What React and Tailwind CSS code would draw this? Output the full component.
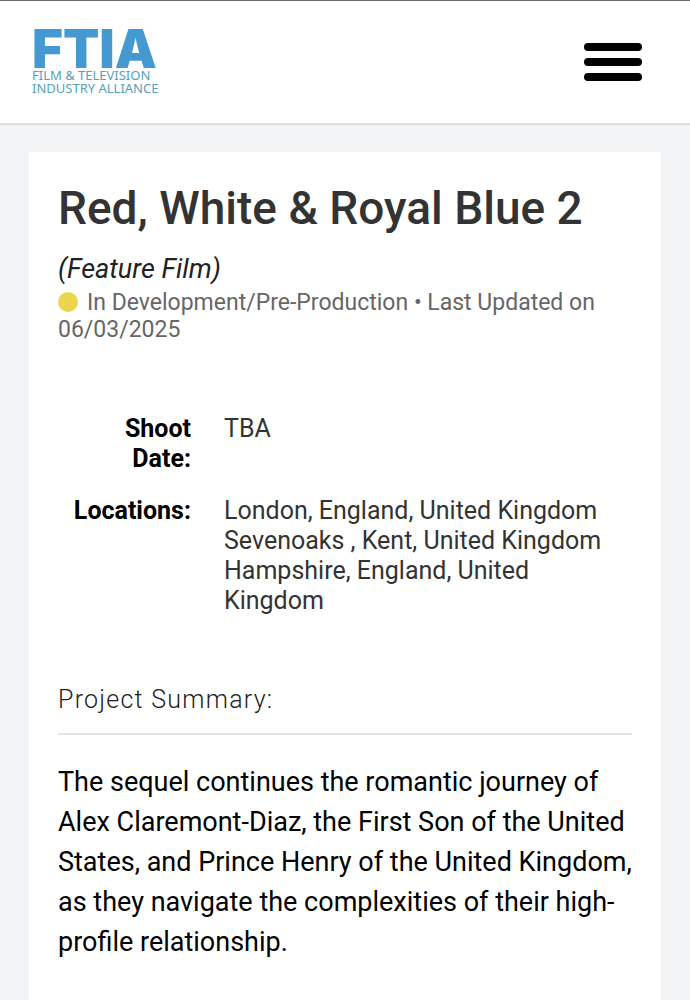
import React from 'react';

const PROJECT = {
  title: 'Red, White & Royal Blue 2',
  type: 'Feature Film',
  status: 'In Development/Pre-Production',
  updated: '06/03/2025',
  shootDate: 'TBA',
  locations: [
    'London, England, United Kingdom',
    'Sevenoaks , Kent, United Kingdom',
    'Hampshire, England, United Kingdom',
  ],
  summary: 'The sequel continues the romantic journey of Alex Claremont-Diaz, the First Son of the United States, and Prince Henry of the United Kingdom, as they navigate the complexities of their high-profile relationship.',
};

function Logo() {
  return (
    <a href="#" className="block text-[#4499d3]">
      <span className="block font-['Inter',sans-serif] text-[53px] font-black leading-[40px]">FTIA</span>
      <span className="block font-['Noto_Sans',sans-serif] text-[13px] leading-[13px] text-[#559fbd]">
        FILM &amp; TELEVISION<br />INDUSTRY ALLIANCE
      </span>
    </a>
  );
}

function Header() {
  return (
    <header className="flex items-center justify-between border-t border-b-2 border-t-[#6b696c] border-b-[#dcdcdc] bg-white py-7 pl-8 pr-12">
      <Logo />
      <button type="button" aria-label="Menu" className="flex flex-col gap-[7px]">
        <span className="h-2 w-[58px] rounded-full bg-black" />
        <span className="h-2 w-[58px] rounded-full bg-black" />
        <span className="h-2 w-[58px] rounded-full bg-black" />
      </button>
    </header>
  );
}

function Detail({ label, children }) {
  return (
    <div className="flex gap-[33px] text-[25px] leading-[30px]">
      <dt className="w-[133px] shrink-0 pl-3 text-right font-bold text-black">{label}:</dt>
      <dd className="flex-1 text-[#333]">{children}</dd>
    </div>
  );
}

export default function App() {
  return (
    <div className="flex min-h-screen flex-col bg-[#f1f3f5] font-['Roboto',sans-serif]">
      <Header />
      <main className="flex flex-1 flex-col px-[29px] pt-[27px]">
        <article className="flex-1 bg-white px-[29px] pt-7 pb-8">
          <h1 className="text-[46px] font-medium leading-[56px] text-[#333]">{PROJECT.title}</h1>
          <p className="mt-4 text-[27px] italic leading-[34px] text-[#222]">({PROJECT.type})</p>
          <p className="mt-[3px] text-[23px] leading-[27px] text-[#666]">
            <span className="mr-[9px] inline-block size-5 rounded-full bg-[#ead54c] align-[-2px]" />
            {PROJECT.status} • Last Updated on {PROJECT.updated}
          </p>

          <dl className="mt-[71px] flex flex-col gap-[22px]">
            <Detail label="Shoot Date">{PROJECT.shootDate}</Detail>
            <Detail label="Locations">
              {PROJECT.locations.map(l => <div key={l}>{l}</div>)}
            </Detail>
          </dl>

          <h2 className="mt-[68px] border-b-2 border-[#e3e3e3] pb-[17px] text-[25px] font-light leading-[32px] tracking-wider text-[#222]">Project Summary:</h2>
          <p className="mt-[27px] text-[27px] leading-[40px] text-black">{PROJECT.summary}</p>
        </article>
      </main>
    </div>
  );
}
